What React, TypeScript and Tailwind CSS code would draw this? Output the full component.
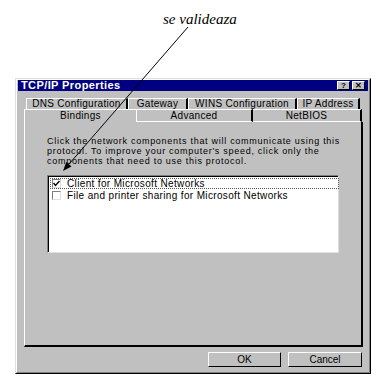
import React from 'react';

const ui = { fontFamily: '"Liberation Sans", Arial, sans-serif' };

// Win95 raised bevel
const raised =
  'border-t border-l border-t-white border-l-white border-r border-b border-r-black border-b-black';

function Tab({ label, w }: { label: string; w: number }) {
  return (
    <div
      className="flex items-center justify-center border-t border-l border-t-white border-l-white border-r-2 border-r-black bg-[#c0c0c0] text-[10px] leading-none text-black tracking-[0.3px]"
      style={{ width: w }}
    >
      {label}
    </div>
  );
}

export default function App() {
  return (
    <div className="relative w-[386px] h-[388px] bg-white overflow-hidden" style={ui}>
      {/* annotation */}
      <div className="h-[78px] pl-[163px] pt-[7px]">
        <span
          className="italic text-[15px] leading-[18px] text-black"
          style={{ fontFamily: '"Liberation Serif", "Times New Roman", serif' }}
        >
          se valideaza
        </span>
      </div>

      {/* dialog */}
      <div className="ml-[15px] w-[356px] h-[296px] bg-[#c0c0c0] border-t border-l border-t-[#dfdfdf] border-l-[#dfdfdf] border-r border-b border-r-black border-b-black">
        <div className="h-full border-t border-l border-t-white border-l-white border-r border-b border-r-[#808080] border-b-[#808080] px-[1px] flex flex-col">
          {/* title bar */}
          <div className="h-[11px] bg-[#000080] flex items-center justify-between pl-[3px] pr-[3px]">
            <span className="text-white font-bold text-[11px] leading-none tracking-[0.4px]">TCP/IP Properties</span>
            <div className="flex gap-[2px]">
              <div className={`w-[13px] h-[9px] bg-[#c0c0c0] ${raised} flex items-center justify-center text-[8px] font-bold leading-none`}>?</div>
              <div className={`w-[13px] h-[9px] bg-[#c0c0c0] ${raised} flex items-center justify-center text-[8px] font-bold leading-none`}>✕</div>
            </div>
          </div>

          {/* tabs */}
          <div className="mt-[7px] pl-[8px] flex h-[11px]">
            <Tab label="DNS Configuration" w={102} />
            <Tab label="Gateway" w={60} />
            <Tab label="WINS Configuration" w={109} />
            <Tab label="IP Address" w={63} />
          </div>
          <div className="pl-[6px] flex h-[13px]">
            <div className="w-[112px] flex items-start justify-center border-t border-l border-t-white border-l-white text-[10px] leading-none pt-[1px] tracking-[0.3px]">
              Bindings
            </div>
            <div className="w-[117px] flex items-center justify-center border-t border-l border-t-white border-l-white border-r-2 border-r-black border-b border-b-white text-[10px] leading-none tracking-[0.3px]">
              Advanced
            </div>
            <div className="w-[109px] flex items-center justify-center border-t border-t-white border-r-2 border-r-black border-b border-b-white text-[10px] leading-none tracking-[0.3px]">
              NetBIOS
            </div>
          </div>

          {/* panel */}
          <div className="ml-[6px] w-[339px] h-[225px] border-l border-l-white border-r-2 border-r-black border-b-2 border-b-black pl-[22px] pt-[14px]">
            <p className="text-[9px] leading-[10px] text-black tracking-[0.72px]">
              Click the network components that will communicate using this
              <br />
              protocol. To improve your computer's speed, click only the
              <br />
              components that need to use this protocol.
            </p>
            <div className="mt-[9px] w-[292px] h-[78px] bg-white border-t border-l border-t-[#808080] border-l-[#808080] border-r border-b border-r-[#dfdfdf] border-b-[#dfdfdf]">
              <div className="h-full border-t border-l border-t-black border-l-black pt-[1px] pl-[1px]">
                <div className="flex items-center h-[11px] w-[289px] border border-dotted border-[#555]">
                  <div className="ml-[1px] w-[9px] h-[9px] border-t border-l border-t-[#808080] border-l-[#808080] border-r border-b border-r-[#dfdfdf] border-b-[#dfdfdf] flex items-center justify-center">
                    <svg width="7" height="7" viewBox="0 0 7 7">
                      <path d="M0.5 3 L2.5 5.5 L6.5 1" stroke="#000" strokeWidth="1.4" fill="none" />
                    </svg>
                  </div>
                  <span className="ml-[6px] text-[10px] leading-none tracking-[0.35px]">Client for Microsoft Networks</span>
                </div>
                <div className="flex items-center h-[11px] mt-[1px]">
                  <div className="ml-[2px] w-[9px] h-[9px] border-t border-l border-t-[#808080] border-l-[#808080] border-r border-b border-r-[#dfdfdf] border-b-[#dfdfdf]" />
                  <span className="ml-[6px] text-[10px] leading-none tracking-[0.35px]">File and printer sharing for Microsoft Networks</span>
                </div>
              </div>
            </div>
          </div>

          {/* buttons */}
          <div className="mt-[5px] pl-[190px] flex gap-[7px]">
            <div className={`w-[73px] h-[15px] ${raised} border-2 border-black flex items-center justify-center text-[10px] leading-none`}>
              OK
            </div>
            <div className={`w-[74px] h-[15px] ${raised} flex items-center justify-center text-[10px] leading-none`}>
              Cancel
            </div>
          </div>
        </div>
      </div>

      {/* arrow */}
      <svg className="absolute inset-0 pointer-events-none" width="386" height="388">
        <line x1="188" y1="27" x2="68.9" y2="164.2" stroke="#000" strokeWidth="1" />
        <polygon points="63,171 71.5,166.5 66.3,161.9" fill="#000" />
      </svg>
    </div>
  );
}
